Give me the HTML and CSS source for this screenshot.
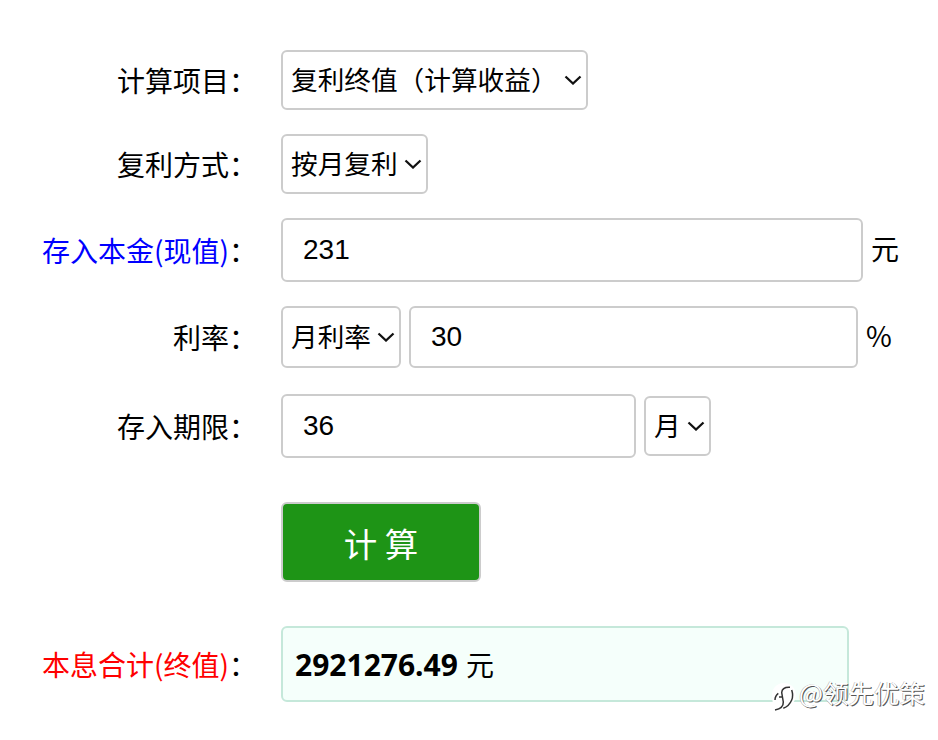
FILE: index.html
```html
<!DOCTYPE html>
<html lang="zh">
<head>
<meta charset="utf-8">
<title>复利计算器</title>
<link rel="stylesheet" href="styles.css">
</head>
<body>
<main class="form">
  <div class="row row-a">
    <div class="label">计算项目：</div>
    <div class="select w-project">复利终值（计算收益）<svg class="chev" viewBox="0 0 18 10"><path d="M1.5 1.5 9 8.5 16.5 1.5"/></svg></div>
  </div>
  <div class="row row-a">
    <div class="label">复利方式：</div>
    <div class="select w-method">按月复利<svg class="chev" viewBox="0 0 18 10"><path d="M1.5 1.5 9 8.5 16.5 1.5"/></svg></div>
  </div>
  <div class="row row-b">
    <div class="label"><span class="blue">存入本金(现值)</span>：</div>
    <input class="input w-principal" value="231">
    <span class="unit unit-yuan">元</span>
  </div>
  <div class="row row-c">
    <div class="label">利率：</div>
    <div class="select w-rate">月利率<svg class="chev" viewBox="0 0 18 10"><path d="M1.5 1.5 9 8.5 16.5 1.5"/></svg></div>
    <input class="input w-ratev" value="30">
    <span class="unit unit-pct">%</span>
  </div>
  <div class="row row-b">
    <div class="label">存入期限：</div>
    <input class="input w-term" value="36">
    <div class="select w-month">月<svg class="chev" viewBox="0 0 18 10"><path d="M1.5 1.5 9 8.5 16.5 1.5"/></svg></div>
  </div>
  <div class="row row-btn">
    <div class="label"></div>
    <button class="btn">计 算</button>
  </div>
  <div class="row row-result">
    <div class="label"><span class="red">本息合计(终值)</span>：</div>
    <div class="result"><b>2921276.49</b> 元</div>
  </div>
</main>
<div class="watermark">
  <svg class="wm-icon" viewBox="0 0 26 30"><path d="M13 1C6 1 1 6 1 13c0 5 1 10 3 15 4 2 8 1 11-3 5-1 10-6 10-12C25 6 20 1 13 1z" fill="#fff"/><path d="M19 5.300C14 5 11 7 10.700 10.500L12.300 20C12.500 24 9 27 4 28M4 18C4 15 5 13 7.300 11.300M20.700 8C22 12 22 15 20.700 18 19 22 16 25 12.300 26.300M8 15h3" fill="none" stroke="#333" stroke-width="1.5"/></svg>
  <span class="wm-text">@领先优策</span>
</div>
</body>
</html>
```
FILE: styles.css
```css
* { box-sizing: border-box; }
html, body { margin: 0; padding: 0; background: #fff; }
body {
  width: 938px;
  height: 740px;
  position: relative;
  overflow: hidden;
  color: #000;
  font-family: "Noto Sans CJK SC", "Noto Sans", sans-serif;
}
.form { display: flex; flex-direction: column; padding-top: 50px; }
.row { display: flex; align-items: center; gap: 8px; }
.row-a { height: 60px; margin-bottom: 24px; }
.row-b { height: 64px; margin-bottom: 24px; }
.row-c { height: 62px; margin-bottom: 26px; }
.row-btn { height: 80px; margin: 20px 0 44px; }
.row-result { height: 76px; }
.label {
  width: 257px;
  margin-right: 16px;
  flex: none;
  font-size: 28px;
  line-height: 40px;
  white-space: nowrap;
  display: flex;
  justify-content: flex-end;
}
.blue { color: #0000ff; }
.red { color: #ff0000; }
.select, .input, .btn, .result { border: 2px solid #cccccc; border-radius: 6px; flex: none; }
.select {
  height: 60px;
  display: flex;
  align-items: center;
  justify-content: space-between;
  padding: 0 4px 4px 8px;
  font-size: 26.67px;
  white-space: nowrap;
  background: #fff;
}
.chev { width: 18px; height: 10px; flex: none; margin-top: 4px; }
.chev path { fill: none; stroke: #111; stroke-width: 2.300; }
.input {
  height: 100%;
  padding: 0 20px;
  font-family: "Liberation Sans", Arial, sans-serif;
  font-size: 28px;
  color: #000;
  background: #fff;
  outline: none;
}
.w-project { width: 307px; }
.w-method { width: 147px; }
.w-principal { width: 582px; }
.w-rate { width: 120px; height: 62px; }
.w-ratev { width: 449px; }
.w-term { width: 355px; }
.w-month { width: 67px; }
.unit { font-size: 28px; line-height: 40px; margin-bottom: 4px; }
.btn {
  width: 200px;
  height: 80px;
  background: #1e9416;
  color: #fff;
  font-family: inherit;
  font-size: 33.5px;
  padding: 0;
}
.result {
  width: 568px;
  height: 76px;
  display: flex;
  align-items: center;
  gap: 8px;
  padding-left: 12px;
  background: #f5fffb;
  border-color: #c5e8da;
  font-size: 28px;
}
.result b { font-family: "Noto Sans", sans-serif; font-weight: 700; font-size: 30px; }
.watermark {
  position: absolute;
  left: 771px;
  top: 675px;
  display: flex;
  align-items: flex-start;
  gap: 2px;
  font-size: 25.5px;
  line-height: 34px;
}
.wm-icon { width: 26px; height: 30px; margin-top: 7px; }
.wm-text { color: #fff; text-shadow: 1px 1px 0 #555, -0.5px -0.5px 0 #aaa; }
```
